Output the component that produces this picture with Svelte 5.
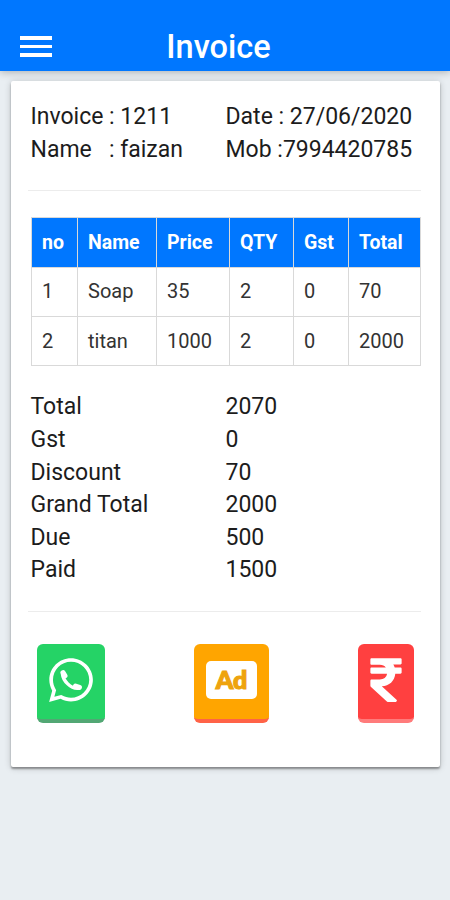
<script>
  const items = [
    { no: 1, name: 'Soap', price: 35, qty: 2, gst: 0, total: 70 },
    { no: 2, name: 'titan', price: 1000, qty: 2, gst: 0, total: 2000 }
  ];

  const summary = [
    ['Total', 2070],
    ['Gst', 0],
    ['Discount', 70],
    ['Grand Total', 2000],
    ['Due', 500],
    ['Paid', 1500]
  ];
</script>

<div class="page">
  <header class="toolbar">
    <button class="menu" aria-label="Menu">
      <span></span>
      <span></span>
      <span></span>
    </button>
    <h1>Invoice</h1>
  </header>

  <main class="card">
    <div class="info">
      <div>Invoice : 1211</div>
      <div>Date : 27/06/2020</div>
      <div class="name">Name   : faizan</div>
      <div>Mob :7994420785</div>
    </div>

    <hr />

    <table>
      <colgroup>
        <col class="c-no" />
        <col class="c-name" />
        <col class="c-price" />
        <col class="c-qty" />
        <col class="c-gst" />
        <col class="c-total" />
      </colgroup>
      <thead>
        <tr>
          <th>no</th>
          <th>Name</th>
          <th>Price</th>
          <th>QTY</th>
          <th>Gst</th>
          <th>Total</th>
        </tr>
      </thead>
      <tbody>
        {#each items as item}
          <tr>
            <td>{item.no}</td>
            <td>{item.name}</td>
            <td>{item.price}</td>
            <td>{item.qty}</td>
            <td>{item.gst}</td>
            <td>{item.total}</td>
          </tr>
        {/each}
      </tbody>
    </table>

    <div class="info summary">
      {#each summary as [label, value]}
        <div>{label}</div>
        <div>{value}</div>
      {/each}
    </div>

    <hr />

    <div class="actions">
      <button class="whatsapp" aria-label="WhatsApp">
        <svg viewBox="0 0 448 512" width="44" height="50" fill="currentColor">
          <path d="M380.9 97.1C339 55.1 283.2 32 223.9 32c-122.4 0-222 99.6-222 222 0 39.1 10.2 77.3 29.6 111L0 480l117.7-30.9c32.4 17.7 68.9 27 106.1 27h.1c122.3 0 224.1-99.6 224.1-222 0-59.3-25.2-115-67.1-157zm-157 341.6c-33.2 0-65.7-8.9-94-25.7l-6.7-4-69.8 18.3L72 359.2l-4.4-7c-18.5-29.4-28.2-63.3-28.2-98.2 0-101.7 82.8-184.5 184.6-184.5 49.3 0 95.6 19.2 130.400 54.100 34.800 34.900 56.200 81.200 56.100 130.500 0 101.800-84.900 184.600-186.600 184.600z" />
          <g fill="none" stroke="currentColor" stroke-linecap="round">
            <path d="M136 192C142 262 220 350 300 342" stroke-width="34" />
            <path d="M142 180l20 34" stroke-width="52" />
            <path d="M270 318l40 14" stroke-width="52" />
          </g>
        </svg>
      </button>
      <button class="ad">
        <span>Ad</span>
      </button>
      <button class="pay" aria-label="Pay">
        <svg viewBox="0 0 320 512" width="32" height="50" fill="currentColor">
          <path d="M308 96c6.6 0 12-5.4 12-12V44c0-6.6-5.4-12-12-12H12C5.4 32 0 37.4 0 44v44.7c0 6.6 5.4 12 12 12h85.3c27.3 0 48.3 10 61 27.3H12c-6.6 0-12 5.4-12 12v40c0 6.6 5.4 12 12 12h158.8c-6.2 36.1-32.6 58.6-74.8 58.6H12c-6.6 0-12 5.4-12 12v53c0 3.3 1.4 6.5 3.9 8.8l165 152.4a12 12 0 0 0 8.1 3.2h82.6c10.9 0 16.2-13.4 8.1-20.8L116.9 319.9c76.5-2.3 131.1-53.4 138.3-127.9H308c6.6 0 12-5.4 12-12v-40c0-6.6-5.4-12-12-12h-58.7c-3.5-11.5-8.3-22.2-14.3-32z" />
        </svg>
      </button>
    </div>
  </main>
</div>

<style>
  :global(body) {
    background: #e9eef2;
    font-family: Roboto, sans-serif;
    color: #1c1c1c;
  }

  .page {
    min-height: 100vh;
    box-sizing: border-box;
    padding-bottom: 20px;
    background: #e9eef2;
  }

  .toolbar {
    height: 71px;
    box-sizing: border-box;
    padding: 22px 20px 0;
    display: grid;
    grid-template-columns: 32px 1fr 45px;
    align-items: center;
    background: #0077ff;
    box-shadow: 0 1px 8px rgba(0, 0, 0, 0.28);
  }

  .menu {
    display: flex;
    flex-direction: column;
    gap: 5px;
    padding: 0;
    border: none;
    background: none;
  }

  .menu span {
    width: 32px;
    height: 3.5px;
    background: #fff;
  }

  h1 {
    margin: 0;
    text-align: center;
    font-size: 32.5px;
    font-weight: 500;
    line-height: 48px;
    color: #fff;
  }

  .card {
    height: 686px;
    box-sizing: border-box;
    margin: 10px 10px 0 11px;
    padding: 20px 19px 0 17px;
    background: #fff;
    border-radius: 2px;
    box-shadow: 0 2px 2px rgba(0, 0, 0, 0.35), 0 1px 7px rgba(0, 0, 0, 0.2);
  }

  .info {
    display: grid;
    grid-template-columns: 195px 1fr;
    padding-left: 2.5px;
    font-size: 23px;
    line-height: 32.6px;
    white-space: nowrap;
  }

  .name {
    white-space: pre;
  }

  hr {
    height: 1px;
    margin: 24px 0 26px;
    border: none;
    background: #ececec;
  }

  table {
    width: 389px;
    margin-left: 2.5px;
    table-layout: fixed;
    border-collapse: collapse;
    font-size: 20px;
  }

  .c-no {
    width: 46px;
  }

  .c-name {
    width: 79px;
  }

  .c-price {
    width: 73px;
  }

  .c-qty {
    width: 64px;
  }

  .c-gst {
    width: 55px;
  }

  .c-total {
    width: 72px;
  }

  th,
  td {
    box-sizing: border-box;
    height: 49.4px;
    padding: 0 0 1px 10.5px;
    border: 1px solid #d9d9d9;
    text-align: left;
    color: #333;
  }

  th {
    padding-bottom: 0;
    background: #0077ff;
    color: #fff;
    font-weight: 700;
    font-size: 19.5px;
  }

  .summary {
    margin-top: 25px;
  }

  .actions {
    display: flex;
    justify-content: space-between;
    margin-top: 32px;
    padding: 0 7px 0 9px;
  }

  .actions button {
    box-sizing: border-box;
    height: 79px;
    padding: 0 12px 2px;
    border: none;
    border-bottom: 4px solid;
    border-radius: 6px;
    color: #fff;
    display: flex;
    align-items: center;
  }

  .actions svg {
    display: block;
  }

  .actions .whatsapp {
    background: #25d366;
    border-bottom-color: #52a774;
  }

  .actions .ad {
    background: #ffa500;
    border-bottom-color: #ff6347;
  }

  .ad span {
    width: 51px;
    height: 38px;
    border-radius: 5px;
    background: #fff;
    color: #eea30e;
    font: 900 25px/37px Lato, sans-serif;
    text-align: center;
    -webkit-text-stroke: 1.2px #eea30e;
  }

  .actions .pay {
    background: #ff4040;
    border-bottom-color: #ff7b7b;
  }
</style>
